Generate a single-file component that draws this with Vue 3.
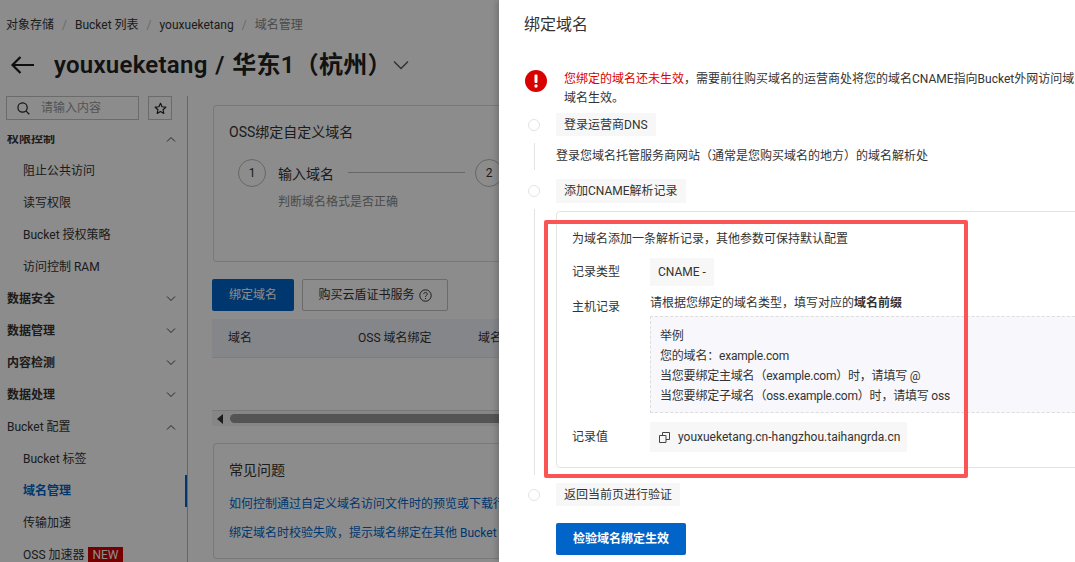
<script setup>
const crumbs = ['对象存储', 'Bucket 列表', 'youxueketang']
const menu = [
  { label: '权限控制', group: true, open: true },
  { label: '阻止公共访问' },
  { label: '读写权限' },
  { label: 'Bucket 授权策略' },
  { label: '访问控制 RAM' },
  { label: '数据安全', group: true },
  { label: '数据管理', group: true },
  { label: '内容检测', group: true },
  { label: '数据处理', group: true },
  { label: 'Bucket 配置', group: true, open: true, light: true },
  { label: 'Bucket 标签' },
  { label: '域名管理', active: true },
  { label: '传输加速' },
  { label: 'OSS 加速器', tag: 'NEW' }
]
const examples = [
  '举例',
  '您的域名：example.com',
  '当您要绑定主域名（example.com）时，请填写 @',
  '当您要绑定子域名（oss.example.com）时，请填写 oss'
]
</script>

<template>
  <div class="page">
    <section class="console">
      <nav class="crumbs">
        <template v-for="c in crumbs" :key="c">
          <span>{{ c }}</span><i>/</i>
        </template>
        <span class="crumb-now">域名管理</span>
      </nav>
      <header class="heading">
        <svg class="back" width="24" height="20" viewBox="0 0 24 20" fill="none" stroke="#1a1a1a" stroke-width="2.2">
          <path d="M24 10H2M10.500 2 2.500 10l8 8" />
        </svg>
        <h1>youxueketang / 华东1（杭州）</h1>
        <svg width="16" height="10" viewBox="0 0 16 10" fill="none" stroke="#555" stroke-width="1.300">
          <path d="M1 1.500 8 8.500l7-7" />
        </svg>
      </header>
      <div class="workspace">
        <aside class="side">
          <div class="search-row">
            <div class="search">
              <svg width="13" height="13" viewBox="0 0 14 14" fill="none" stroke="#222" stroke-width="1.300">
                <circle cx="6" cy="6" r="5" /><path d="m9.800 9.800 3.400 3.400" />
              </svg>
              <span>请输入内容</span>
            </div>
            <div class="star">
              <svg width="13" height="13" viewBox="0 0 24 24" fill="none" stroke="#222" stroke-width="2.200" stroke-linejoin="round">
                <path d="m12 2.500 2.900 6.300 6.900.8-5.100 4.700 1.400 6.800-6.100-3.400-6.100 3.400 1.400-6.800-5.100-4.700 6.900-.8z" />
              </svg>
            </div>
          </div>
          <div class="menu-clip">
            <ul class="menu">
              <li
                v-for="m in menu"
                :key="m.label"
                :class="{ group: m.group, active: m.active, light: m.light }"
              >
                <span>{{ m.label }}</span>
                <em v-if="m.tag">{{ m.tag }}</em>
                <svg v-if="m.group" width="10" height="6" viewBox="0 0 10 6" fill="none" stroke="#444" stroke-width="1">
                  <path :d="m.open ? 'M1 5.500 5 1.500l4 4' : 'M1 .5l4 4 4-4'" />
                </svg>
              </li>
            </ul>
          </div>
        </aside>
        <main class="content">
          <div class="card steps-card">
            <h2>OSS绑定自定义域名</h2>
            <div class="steps">
              <b class="num">1</b>
              <div class="step-text">
                <div class="step-name">输入域名<u></u></div>
                <p>判断域名格式是否正确</p>
              </div>
              <b class="num">2</b>
            </div>
          </div>
          <div class="actions">
            <button class="primary">绑定域名</button>
            <button class="ghost">
              购买云盾证书服务
              <svg width="13" height="13" viewBox="0 0 13 13" fill="none" stroke="#333">
                <circle cx="6.500" cy="6.500" r="5.700" />
                <path d="M4.800 5.100c0-2.300 3.500-2.200 3.500 0 0 1.300-1.800 1.300-1.800 2.700M6.500 9v1" />
              </svg>
            </button>
          </div>
          <div class="thead">
            <span class="c1">域名</span><span class="c2">OSS 域名绑定</span><span>域名</span>
          </div>
          <div class="scrollbar">
            <i class="arrow"></i><i class="thumb"></i>
          </div>
          <div class="card faq">
            <h2>常见问题</h2>
            <a>如何控制通过自定义域名访问文件时的预览或下载行为</a>
            <a>绑定域名时校验失败，提示域名绑定在其他 Bucket 下</a>
          </div>
        </main>
      </div>
      <div class="mask"></div>
    </section>

    <section class="drawer">
      <h3>绑定域名</h3>
      <div class="alert">
        <svg width="22" height="22" viewBox="0 0 22 22">
          <circle cx="11" cy="11" r="11" fill="#d90000" />
          <rect x="9.500" y="4.500" width="3" height="8.500" rx="1" fill="#fff" />
          <circle cx="11" cy="16" r="1.700" fill="#fff" />
        </svg>
        <p>
          <span class="red">您绑定的域名还未生效</span>，需要前往购买域名的运营商处将您的域名CNAME指向Bucket外网访问域名，<br />域名生效。
        </p>
      </div>

      <div class="head first"><i class="dot"></i><span class="tag">登录运营商DNS</span></div>
      <div class="body body-one">登录您域名托管服务商网站（通常是您购买域名的地方）的域名解析处</div>

      <div class="head second"><i class="dot"></i><span class="tag">添加CNAME解析记录</span></div>
      <div class="body body-two">
        <div class="panel">
          <p class="panel-intro">为域名添加一条解析记录，其他参数可保持默认配置</p>
          <div class="field type-field">
            <label>记录类型</label>
            <span class="value">CNAME -</span>
          </div>
          <div class="field host-field">
            <label>主机记录</label>
            <div class="host">
              <p>请根据您绑定的域名类型，填写对应的<strong>域名前缀</strong></p>
              <div class="example">
                <div v-for="e in examples" :key="e">{{ e }}</div>
              </div>
            </div>
          </div>
          <div class="field record-field">
            <label>记录值</label>
            <span class="value record">
              <svg width="11" height="11" viewBox="0 0 11 11" fill="none" stroke="#444">
                <path d="M.5 3.500h6.500v7H.5zM3.500 3.500V.5h7v7H7" />
              </svg>
              youxueketang.cn-hangzhou.taihangrda.cn
            </span>
          </div>
        </div>
      </div>

      <div class="head third"><i class="dot"></i><span class="tag">返回当前页进行验证</span></div>
      <button class="verify">检验域名绑定生效</button>
      <div class="annotation"></div>
    </section>
  </div>
</template>

<style>
html, body { margin: 0; background: #fff; }
</style>

<style scoped>
* { box-sizing: border-box; }
.page {
  position: relative;
  display: flex;
  width: 1075px;
  height: 562px;
  overflow: hidden;
  background: #fff;
  color: #333;
  font: 12px/18px Roboto, "Noto Sans CJK SC", sans-serif;
}
h1, h2, h3, p, ul { margin: 0; padding: 0; }
ul { list-style: none; }
i, em, u { font-style: normal; text-decoration: none; }

.console {
  position: relative;
  flex: 0 0 499px;
  display: flex;
  flex-direction: column;
  overflow: hidden;
  background: #fff;
}
.mask { position: absolute; inset: 0; background: rgba(0, 0, 0, .45); }
.crumbs { display: flex; height: 18px; margin: 16px 0 0 6px; white-space: nowrap; color: #333; }
.crumbs i { margin: 0 8px; color: #c4c4c4; }
.crumb-now { color: #888; }
.heading { display: flex; align-items: center; height: 40px; margin: 11px 0 0 10px; white-space: nowrap; }
.heading h1 { margin: 0 1px 0 20px; font-size: 24px; line-height: 40px; font-weight: 600; letter-spacing: .25px; word-spacing: 1.5px; color: #222; }
.workspace { display: flex; height: 466px; margin-top: 11px; }
.side { flex: 0 0 188px; display: flex; flex-direction: column; border-right: 1px solid #bbb; }
.search-row { display: flex; gap: 9px; margin-left: 6px; height: 24px; }
.search { display: flex; align-items: center; gap: 11px; width: 133px; padding-left: 10px; border: 1px solid #c4c4c4; color: #999; }
.star { display: flex; align-items: center; justify-content: center; width: 24px; border: 1px solid #c4c4c4; }
.menu-clip { flex: 1; margin-top: 15px; overflow: hidden; }
.menu { margin-top: -12px; }
.menu li { position: relative; display: flex; align-items: center; height: 32px; padding-left: 23px; white-space: nowrap; color: #333; }
.menu li.group { padding-left: 7px; font-weight: 600; }
.menu li.light { font-weight: 400; }
.menu li svg { position: absolute; left: 166px; top: 13px; }
.menu li.active { color: #0064c8; font-weight: 600; }
.menu li.active::after { content: ""; position: absolute; right: 0; top: 0; bottom: 0; width: 2px; background: #0064c8; }
.menu em { margin-left: 4px; padding: 0 4px; height: 16px; line-height: 16px; background: #d40000; color: #fff; }

.content { flex: 0 0 auto; width: 400px; padding: 9px 0 0 24px; white-space: nowrap; }
.card { margin-left: 1px; border: 1px solid #ddd; border-radius: 4px; border-right: 0; }
.card h2 { font-size: 14px; font-weight: 400; line-height: 20px; color: #333; }
.steps-card { height: 157px; padding: 16px 0 0 15px; }
.steps { display: flex; margin: 17px 0 0 9px; }
.num { flex: none; width: 28px; height: 28px; border: 1px solid #bbb; border-radius: 50%; font-weight: 400; line-height: 26px; text-align: center; }
.step-text { width: 197px; margin-left: 12px; }
.step-name { display: flex; align-items: center; height: 28px; padding-top: 2px; font-size: 14px; }
.step-name u { width: 117px; height: 1px; margin: -4px 0 0 14px; background: #bbb; }
.step-text p { margin-top: 6px; color: #888; }
.actions { display: flex; gap: 8px; margin-top: 17px; }
button { font: inherit; border-radius: 2px; padding: 0; }
.primary { width: 82px; height: 32px; border: 0; background: #0064c8; color: #fff; }
.ghost { display: flex; align-items: center; justify-content: center; gap: 4px; width: 146px; height: 32px; border: 1px solid #c4c4c4; background: #fff; color: #333; }
.thead { display: flex; align-items: center; height: 39px; margin-top: 8px; padding-left: 16px; border-bottom: 1px solid #e5e5e5; background: #f2f5fb; }
.c1 { width: 130px; }
.c2 { width: 120px; }
.scrollbar { position: relative; height: 16px; margin-top: 52px; border-top: 1px solid #ddd; background: #f5f5f5; }
.arrow { position: absolute; left: 5px; top: 3px; border: 5px solid transparent; border-left: 0; border-right: 6px solid #333; }
.thumb { position: absolute; left: 18px; top: 3px; width: 280px; height: 9px; border-radius: 5px; background: #999; }
.faq { height: 116px; margin-top: 17px; padding: 16px 0 0 15px; }
.faq h2 { margin-bottom: 15px; }
.faq a { display: block; margin-bottom: 11px; color: #0064c8; }

.drawer {
  position: relative;
  flex: 0 0 576px;
  padding-left: 25px;
  background: #fff;
  white-space: nowrap;
  box-shadow: -2px 0 6px rgba(0, 0, 0, .2);
}
.drawer h3 { margin-top: 13px; font-size: 16px; line-height: 24px; font-weight: 400; color: #333; }
.alert { display: flex; height: 44px; margin-top: 32px; margin-left: 1px; }
.alert svg { flex: none; margin-top: 1px; }
.alert p { margin: 1px 0 0 17px; line-height: 19px; }
.red { color: #d90000; }
.head { display: flex; align-items: center; margin-left: 4px; height: 24px; }
.first { height: 23px; }
.dot { flex: none; width: 12px; height: 12px; border: 1px solid #e3e3e3; border-radius: 50%; }
.tag { margin-left: 16px; padding: 0 8px; height: 100%; line-height: 25px; background: #f7f7f7; }
.body { margin-left: 10px; padding-left: 21px; border-left: 1px solid #e3e3e3; }
.body-one { height: 27px; margin-top: 7px; margin-bottom: 9px; padding-top: 4px; }
.body-two { height: 266px; margin-top: 6px; margin-bottom: 8px; padding-top: 2px; }
.panel { width: 560px; height: 257px; padding: 17px 0 0 15px; border: 1px solid #e3e3e3; border-radius: 4px; }
.panel-intro { line-height: 20px; }
.field { display: flex; }
.field label { flex: 0 0 78px; }
.type-field { align-items: center; height: 28px; margin-top: 9px; }
.host-field { margin-top: 7px; }
.host-field label { padding-top: 5px; }
.host p { line-height: 20px; }
.host strong { font-weight: 600; }
.example { width: 450px; height: 97px; margin-top: 3px; padding: 9px 9px; border: 1px dashed #ddd; background: #f8f8fc; line-height: 20px; letter-spacing: -.2px; }
.record-field { align-items: center; height: 30px; margin-top: 9px; }
.value { display: flex; align-items: center; height: 100%; padding: 0 8px 0 8px; background: #f7f7f7; }
.record { gap: 8px; width: 257px; padding-left: 9px; }
.record svg { flex: none; }
.third { height: 23px; }
.verify { display: block; width: 130px; height: 32px; margin: 17px 0 0 32px; border: 0; background: #0064c8; color: #fff; font-weight: 600; }
.annotation {
  position: absolute;
  left: 45px;
  top: 220px;
  width: 424px;
  height: 258px;
  border: 4px solid #fb5454;
  border-radius: 2px;
}
</style>
